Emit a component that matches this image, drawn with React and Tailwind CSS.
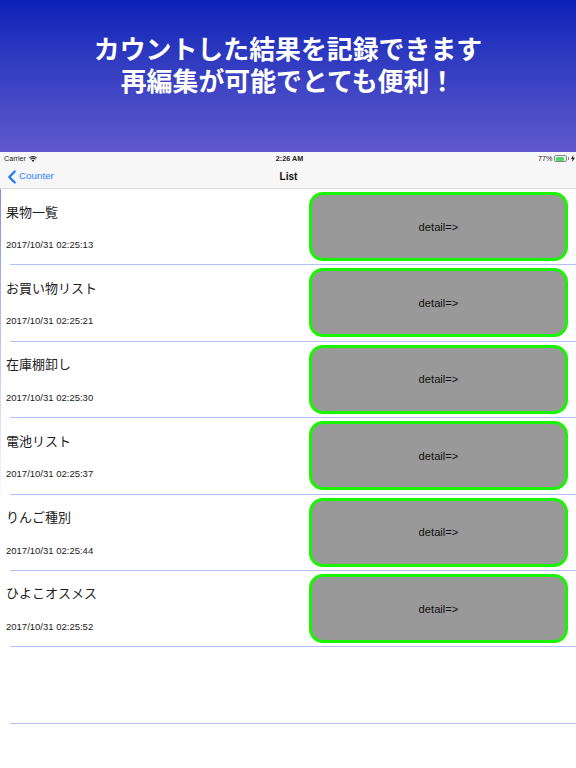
import React from 'react';
import { ChevronLeft } from 'lucide-react';

const rows = [
  { title: '果物一覧', date: '2017/10/31 02:25:13' },
  { title: 'お買い物リスト', date: '2017/10/31 02:25:21' },
  { title: '在庫棚卸し', date: '2017/10/31 02:25:30' },
  { title: '電池リスト', date: '2017/10/31 02:25:37' },
  { title: 'りんご種別', date: '2017/10/31 02:25:44' },
  { title: 'ひよこオスメス', date: '2017/10/31 02:25:52' },
];

const sans = 'font-["Liberation_Sans","Noto_Sans_CJK_JP",sans-serif]';

function Wifi() {
  return (
    <svg width="8" height="6" viewBox="0 0 20 15" className="text-[#222]">
      <path fill="currentColor" d="M10 15 L6.6 11.2 A5 5 0 0 1 13.4 11.2 Z M4.9 9.4 L3 7.3 A10 10 0 0 1 17 7.3 L15.1 9.4 A7.4 7.4 0 0 0 4.9 9.4 Z M1.6 5.8 L0 4 A14.5 14.5 0 0 1 20 4 L18.4 5.8 A12.2 12.2 0 0 0 1.6 5.8 Z" />
    </svg>
  );
}

function Battery() {
  return (
    <div className="flex items-center">
      <div className="flex h-[7px] w-[13px] rounded-[2px] border-[0.5px] border-[#888] p-[0.5px]">
        <div className="h-full w-[77%] rounded-[1px] bg-[#4cd964]" />
      </div>
      <div className="ml-[0.5px] h-[3px] w-[1px] bg-[#888]" />
      <svg width="4" height="7" viewBox="0 0 4 7" className="ml-[2px]">
        <path fill="#222" d="M2.4 0 L0 4 H1.6 L1.2 7 L4 2.8 H2.2 Z" />
      </svg>
    </div>
  );
}

function Row({ title, date }) {
  return (
    <div className="flex h-[76.4px] flex-col">
      <div className="flex flex-1 items-start justify-between pl-[5px] pr-2">
        <div className="flex flex-col">
          <span className="mt-[14.5px] text-[13px] leading-[18px] text-[#222]">{title}</span>
          <span className="mt-[16.5px] text-[9.5px] leading-[14px] text-[#222]">{date}</span>
        </div>
        <div className="mt-[3px] flex h-[69px] w-[259px] items-center justify-center rounded-[14px] border-[3px] border-[#19f500] bg-[#999999] pt-[1px] text-[11.2px] text-[#111]">
          detail=&gt;
        </div>
      </div>
      <div className="ml-[9px] h-px bg-[#b4c0f8]" />
    </div>
  );
}

export default function App() {
  return (
    <div className={`flex h-[768px] w-[576px] flex-col overflow-hidden bg-white ${sans}`}>
      <div className="flex h-[152px] flex-col items-center bg-gradient-to-b from-[#0c20b8] to-[#6058cc] pt-[34px] text-center text-[25.9px] leading-[32px] font-bold text-white">
        <div>カウントした結果を記録できます</div>
        <div>再編集が可能でとても便利！</div>
      </div>
      <div className="flex h-[37px] flex-col border-b border-[#dcdcdc] bg-[#f7f7f7] pl-[1px]">
        <div className="flex h-[13px] items-center justify-between pt-[1px] pr-[1px] pl-[3px] text-[7.2px] text-[#222]">
          <div className="flex w-[60px] items-center gap-[3px]">
            Carrier
            <Wifi />
          </div>
          <div className="font-bold">2:26 AM</div>
          <div className="flex w-[60px] items-center justify-end gap-[2px]">
            77%
            <Battery />
          </div>
        </div>
        <div className="flex flex-1 items-center justify-between">
          <div className="flex w-[80px] items-center text-[9.8px] text-[#2a7fff]">
            <ChevronLeft size={22} strokeWidth={2.4} className="-mr-[4px] text-[#1a78ff]" />
            Counter
          </div>
          <div className="text-[10px] font-bold text-[#111]">List</div>
          <div className="w-[80px]" />
        </div>
      </div>
      <div className="flex-1 bg-gradient-to-b from-[#8a88e8] to-white to-[55%] pl-[1px]">
        <div className="h-full bg-white">
          {rows.map((r) => (
            <Row key={r.date} title={r.title} date={r.date} />
          ))}
          <div className="flex h-[76.4px] flex-col justify-end">
            <div className="ml-[9px] h-px bg-[#b4c0f8]" />
          </div>
        </div>
      </div>
    </div>
  );
}
